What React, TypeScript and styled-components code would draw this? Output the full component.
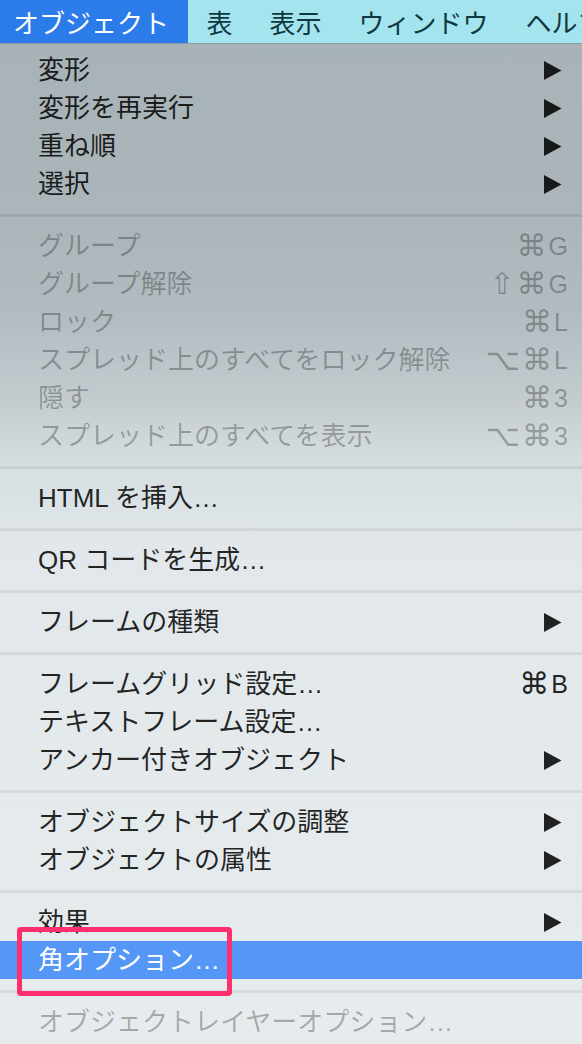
import React from "react";
import styled, { createGlobalStyle, css } from "styled-components";

const GlobalStyle = createGlobalStyle`
  html, body { margin: 0; padding: 0; }
  body {
    font-family: "Liberation Sans", "Noto Sans CJK JP", sans-serif;
    background: #e6ebee;
  }
`;

const Screen = styled.div`
  width: 582px;
  height: 1044px;
  overflow: hidden;
  display: flex;
  flex-direction: column;
`;

const MenuBar = styled.div`
  height: 43px;
  flex: none;
  display: flex;
  align-items: stretch;
  background: #a4e4ee;
  border-bottom: 1px solid #8e9ba0;
  white-space: nowrap;
  overflow: hidden;
`;

const MenuTitle = styled.div<{ $active?: boolean }>`
  display: flex;
  align-items: center;
  flex: none;
  padding: 0 18.5px;
  font-size: 26px;
  color: #0f383e;
  ${(p) =>
    p.$active &&
    css`
      padding: 0 19px 0 13px;
      background: #2b7be9;
      color: #ffffff;
    `}
`;

const Panel = styled.div`
  flex: 1;
  padding-top: 7px;
  display: flex;
  flex-direction: column;
  background: linear-gradient(
    180deg,
    #a8b3b8 0%,
    #abb5ba 18%,
    #b2bcc0 27%,
    #c2cace 35%,
    #d6dee1 42%,
    #e1e7ea 50%,
    #e4e9ec 70%,
    #e6ebee 100%
  );
`;

const Section = styled.div`
  display: flex;
  flex-direction: column;
`;

const Separator = styled.div`
  height: 3px;
  margin: 11px 0 10px;
  background: rgba(0, 0, 0, 0.065);
`;

const Row = styled.div<{ $disabled?: boolean; $highlight?: boolean }>`
  position: relative;
  height: 38px;
  display: flex;
  align-items: center;
  padding: 0 14px 0 38px;
  font-size: 26px;
  line-height: 1;
  color: rgba(0, 0, 0, 0.86);
  ${(p) =>
    p.$disabled &&
    css`
      color: rgba(0, 0, 0, 0.28);
    `}
  ${(p) =>
    p.$highlight &&
    css`
      background: #5597f6;
      color: #ffffff;
    `}
`;

const Label = styled.span`
  flex: 1;
  white-space: nowrap;
`;

const Shortcut = styled.span`
  display: flex;
  align-items: center;
  gap: 2px;
  white-space: nowrap;
`;

const ModKey = styled.span`
  font-family: "DejaVu Sans", sans-serif;
  font-size: 30px;
  line-height: 1;
`;

const Key = styled.span`
  font-family: "Liberation Sans", sans-serif;
  font-size: 25px;
  line-height: 1;
`;

const ArrowWrap = styled.span`
  display: flex;
  margin-right: 6px;
  color: rgba(0, 0, 0, 0.86);
`;

const Marker = styled.div`
  position: absolute;
  left: 17px;
  top: -14px;
  width: 215px;
  height: 69px;
  box-sizing: border-box;
  border: 5px solid #fe2f6c;
  border-radius: 4px;
  pointer-events: none;
  z-index: 2;
`;

const Arrow = () => (
  <ArrowWrap>
    <svg width="18" height="19" viewBox="0 0 18 19">
      <path d="M0 0 L17.5 9.5 L0 19 Z" fill="currentColor" />
    </svg>
  </ArrowWrap>
);

const ShortcutKeys = ({ value }: { value: string }) => {
  const chars = Array.from(value);
  const key = chars.pop();
  return (
    <Shortcut>
      {chars.map((c, i) => (
        <ModKey key={i}>{c}</ModKey>
      ))}
      <Key>{key}</Key>
    </Shortcut>
  );
};

type Item = {
  label: string;
  shortcut?: string;
  arrow?: boolean;
  disabled?: boolean;
  highlight?: boolean;
  marked?: boolean;
};

const sections: Item[][] = [
  [
    { label: "変形", arrow: true },
    { label: "変形を再実行", arrow: true },
    { label: "重ね順", arrow: true },
    { label: "選択", arrow: true },
  ],
  [
    { label: "グループ", shortcut: "⌘G", disabled: true },
    { label: "グループ解除", shortcut: "⇧⌘G", disabled: true },
    { label: "ロック", shortcut: "⌘L", disabled: true },
    { label: "スプレッド上のすべてをロック解除", shortcut: "⌥⌘L", disabled: true },
    { label: "隠す", shortcut: "⌘3", disabled: true },
    { label: "スプレッド上のすべてを表示", shortcut: "⌥⌘3", disabled: true },
  ],
  [{ label: "HTML を挿入…" }],
  [{ label: "QR コードを生成…" }],
  [{ label: "フレームの種類", arrow: true }],
  [
    { label: "フレームグリッド設定…", shortcut: "⌘B" },
    { label: "テキストフレーム設定…" },
    { label: "アンカー付きオブジェクト", arrow: true },
  ],
  [
    { label: "オブジェクトサイズの調整", arrow: true },
    { label: "オブジェクトの属性", arrow: true },
  ],
  [
    { label: "効果", arrow: true },
    { label: "角オプション…", highlight: true, marked: true },
  ],
  [{ label: "オブジェクトレイヤーオプション…", disabled: true }],
];

const titles = ["オブジェクト", "表", "表示", "ウィンドウ", "ヘルプ"];

export default function App() {
  return (
    <>
      <GlobalStyle />
      <Screen>
        <MenuBar>
          {titles.map((t, i) => (
            <MenuTitle key={t} $active={i === 0}>
              {t}
            </MenuTitle>
          ))}
        </MenuBar>
        <Panel>
          {sections.map((items, si) => (
            <React.Fragment key={si}>
              {si > 0 && <Separator />}
              <Section>
                {items.map((it) => (
                  <Row key={it.label} $disabled={it.disabled} $highlight={it.highlight}>
                    <Label>{it.label}</Label>
                    {it.shortcut && <ShortcutKeys value={it.shortcut} />}
                    {it.arrow && <Arrow />}
                    {it.marked && <Marker />}
                  </Row>
                ))}
              </Section>
            </React.Fragment>
          ))}
        </Panel>
      </Screen>
    </>
  );
}
